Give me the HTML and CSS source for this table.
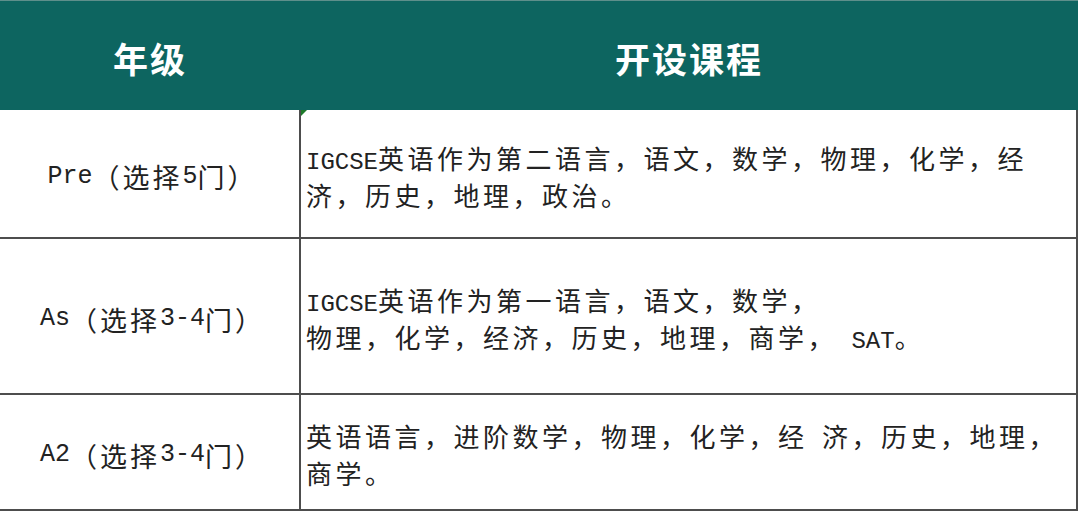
FILE: index.html
```html
<!DOCTYPE html>
<html lang="zh-CN">
<head>
<meta charset="utf-8">
<title>开设课程</title>
<link rel="stylesheet" href="styles.css">
</head>
<body>
<div class="sheet">
  <div class="head">
    <div class="hcell">年级</div>
    <div class="hcell">开设课程</div>
  </div>
  <div class="row row-1">
    <div class="grade"><span class="lat">Pre</span>（选择<span class="lat">5</span>门）</div>
    <div class="courses marked"><p class="txt"><span class="lat">IGCSE</span>英语作为第二语言，语文，数学，物理，化学，经<br>济，历史，地理，政治。</p></div>
  </div>
  <div class="row row-2">
    <div class="grade"><span class="lat">As</span>（选择<span class="lat">3-4</span>门）</div>
    <div class="courses"><p class="txt"><span class="lat">IGCSE</span>英语作为第一语言，语文，数学，<br>物理，化学，经济，历史，地理，商学，<span class="lat"> SAT</span>。</p></div>
  </div>
  <div class="row row-3">
    <div class="grade"><span class="lat">A2</span>（选择<span class="lat">3-4</span>门）</div>
    <div class="courses"><p class="txt">英语语言，进阶数学，物理，化学，经<span class="lat"> </span>济，历史，地理，<br>商学。</p></div>
  </div>
</div>
</body>
</html>
```

FILE: styles.css
```css
html, body {
  margin: 0;
  padding: 0;
  background: #ffffff;
}

body {
  font-family: "Noto Sans CJK SC", "Noto Sans", sans-serif;
  color: #222222;
}

.sheet {
  width: 1078px;
}

.head {
  display: grid;
  grid-template-columns: 300px 778px;
  height: 110px;
  background: #0d6560;
  border-top: 1px solid #5e8f8b;
  box-sizing: border-box;
}

.hcell {
  display: flex;
  align-items: center;
  justify-content: center;
  color: #ffffff;
  font-size: 35px;
  font-weight: 700;
  letter-spacing: 2px;
  padding-top: 3px;
}

.row {
  display: grid;
  grid-template-columns: 301px 777px;
  border-bottom: 2px solid #4d4d4d;
  box-sizing: border-box;
}

.row-1 { height: 129px; }
.row-2 { height: 156px; }
.row-3 { height: 116px; }

.grade {
  display: flex;
  align-items: center;
  justify-content: center;
  border-right: 2px solid #4d4d4d;
  font-size: 27px;
  letter-spacing: 3px;
  white-space: nowrap;
  padding: 6px 0 0 6px;
}

.grade .lat {
  font-size: 25px;
}

.courses {
  display: flex;
  align-items: center;
  border-right: 2px solid #4d4d4d;
  padding: 4px 4px 0 5px;
  font-size: 26px;
  letter-spacing: 3.5px;
  white-space: nowrap;
}

.txt {
  margin: 0;
  line-height: 37px;
}

.lat {
  font-family: "Liberation Mono", monospace;
  font-size: 24px;
  letter-spacing: 0;
  line-height: 0;
}

.marked {
  position: relative;
}

.marked::before {
  content: "";
  position: absolute;
  left: 0;
  top: 0;
  width: 0;
  height: 0;
  border-top: 6px solid #1d7a2a;
  border-right: 6px solid transparent;
}
```
